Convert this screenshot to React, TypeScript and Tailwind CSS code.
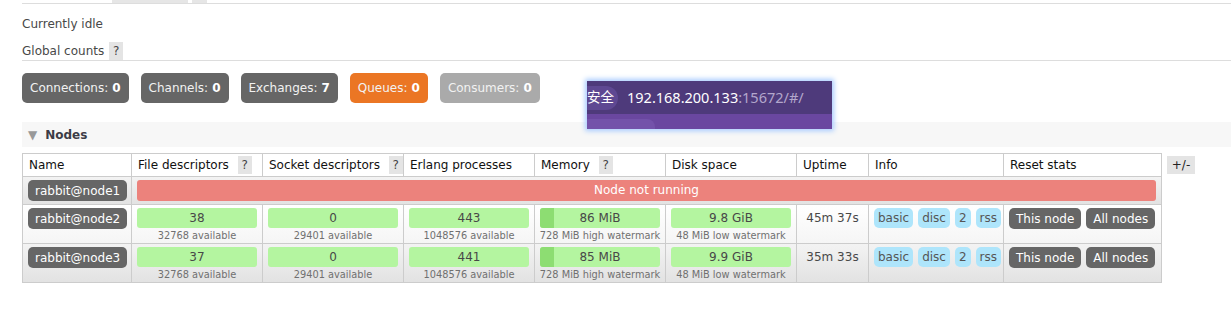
import React from "react";

type NodeRow = {
  name: string;
  fd: string;
  fdAvail: string;
  sd: string;
  sdAvail: string;
  erl: string;
  erlAvail: string;
  mem: string;
  memFill: number;
  disk: string;
  uptime: string;
};

const nodes: NodeRow[] = [
  {
    name: "rabbit@node2",
    fd: "38",
    fdAvail: "32768 available",
    sd: "0",
    sdAvail: "29401 available",
    erl: "443",
    erlAvail: "1048576 available",
    mem: "86 MiB",
    memFill: 14,
    disk: "9.8 GiB",
    uptime: "45m 37s",
  },
  {
    name: "rabbit@node3",
    fd: "37",
    fdAvail: "32768 available",
    sd: "0",
    sdAvail: "29401 available",
    erl: "441",
    erlAvail: "1048576 available",
    mem: "85 MiB",
    memFill: 14,
    disk: "9.9 GiB",
    uptime: "35m 33s",
  },
];

const Help = () => (
  <span className="ml-[5px] inline-flex h-[18px] w-[14px] items-center justify-center bg-[#e4e4e4] text-[#444]">
    ?
  </span>
);

const Pill = ({ children }: { children: React.ReactNode }) => (
  <span className="inline-flex h-[21px] items-center rounded-[5px] bg-[#666] px-[7px] text-white">
    {children}
  </span>
);

const Gauge = ({ value, sub, fill }: { value: string; sub: string; fill?: number }) => (
  <div className="flex flex-col items-center">
    <div className="relative h-[20px] w-full overflow-hidden rounded-[3px] bg-[#b4f5a0] text-center leading-[20px] text-[#484848]">
      {fill ? (
        <div className="absolute inset-y-0 left-0 bg-[#8ddd72]" style={{ width: fill }} />
      ) : null}
      <span className="relative">{value}</span>
    </div>
    <div className="mt-[1px] whitespace-nowrap text-[9.8px] leading-[13px] text-[#707070]">{sub}</div>
  </div>
);

const Count = ({ label, value, color }: { label: string; value: number; color: string }) => (
  <div className={`flex h-[30px] items-center rounded-[5px] px-[8px] text-[#f2f2f2] ${color}`}>
    {label}: <b className="ml-[4px] text-white">{value}</b>
  </div>
);

export default function App() {
  const th = "h-[23px] border border-[#ccc] px-[6px] text-left font-normal text-[#111] whitespace-nowrap";
  const td = "border border-[#ccc] px-[5px] pt-[3px] pb-[1px] align-top";

  return (
    <div className="relative h-[309px] w-[1231px] overflow-hidden bg-white font-['DejaVu_Sans',Verdana,sans-serif] text-[12px] text-[#484848]">
      <div className="pl-[22px]">
        <div className="flex h-[3px] gap-[4px] pl-[90px]">
          <div className="w-[76px] bg-[#e6e6e6]" />
          <div className="w-[15px] bg-[#e6e6e6]" />
        </div>
        <div className="border-t border-[#ddd]" />

        <div className="mt-[10px] leading-[20px]">Currently idle</div>
        <div className="mt-[8px] flex h-[19px] items-stretch border-b border-[#ddd] leading-[19px]">
          <span>Global counts</span>
          <span className="ml-[5px] flex w-[14px] items-center justify-center bg-[#e4e4e4] text-[#444]">?</span>
        </div>

        <div className="mt-[12px] flex gap-[12px]">
          <Count label="Connections" value={0} color="bg-[#666]" />
          <Count label="Channels" value={0} color="bg-[#666]" />
          <Count label="Exchanges" value={7} color="bg-[#666]" />
          <Count label="Queues" value={0} color="bg-[#eb7624]" />
          <Count label="Consumers" value={0} color="bg-[#aaa]" />
        </div>

        <div className="mt-[19px] flex h-[25px] items-center bg-[#f7f7f7] pl-[6px]">
          <span className="text-[12px] text-[#999]">▼</span>
          <span className="ml-[8px] font-bold text-[#3c3c46]">Nodes</span>
        </div>

        <div className="mt-[6px] flex items-start">
          <table className="w-[1139px] table-fixed border-collapse">
            <colgroup>
              <col className="w-[109px]" />
              <col className="w-[131px]" />
              <col className="w-[141px]" />
              <col className="w-[131px]" />
              <col className="w-[131px]" />
              <col className="w-[131px]" />
              <col className="w-[72px]" />
              <col className="w-[135px]" />
              <col className="w-[158px]" />
            </colgroup>
            <thead>
              <tr className="bg-white">
                <th className={th}>Name</th>
                <th className={th}>
                  File descriptors <Help />
                </th>
                <th className={th}>
                  Socket descriptors <Help />
                </th>
                <th className={th}>Erlang processes</th>
                <th className={th}>
                  Memory <Help />
                </th>
                <th className={th}>Disk space</th>
                <th className={th}>Uptime</th>
                <th className={th}>Info</th>
                <th className={th}>Reset stats</th>
              </tr>
            </thead>
            <tbody>
              <tr className="bg-linear-to-b from-[#f3f3f3] to-[#e2e2e2]">
                <td className="border border-[#ccc] px-[5px] pt-[3px] pb-[3px]">
                  <Pill>rabbit@node1</Pill>
                </td>
                <td colSpan={8} className="border border-[#ccc] px-[5px] pt-[3px] pb-[3px]">
                  <div className="h-[21px] rounded-[3px] bg-[#ec827c] text-center leading-[21px] text-white">
                    Node not running
                  </div>
                </td>
              </tr>
              {nodes.map((n, i) => (
                <tr
                  key={n.name}
                  className={
                    i % 2 === 0
                      ? "bg-linear-to-b from-white to-[#f5f5f5]"
                      : "bg-linear-to-b from-[#f3f3f3] to-[#e2e2e2]"
                  }
                >
                  <td className={td}>
                    <Pill>{n.name}</Pill>
                  </td>
                  <td className={td}>
                    <Gauge value={n.fd} sub={n.fdAvail} />
                  </td>
                  <td className={td}>
                    <Gauge value={n.sd} sub={n.sdAvail} />
                  </td>
                  <td className={td}>
                    <Gauge value={n.erl} sub={n.erlAvail} />
                  </td>
                  <td className={td}>
                    <Gauge value={n.mem} sub="728 MiB high watermark" fill={n.memFill} />
                  </td>
                  <td className={td}>
                    <Gauge value={n.disk} sub="48 MiB low watermark" />
                  </td>
                  <td className={`${td} text-center leading-[20px]`}>{n.uptime}</td>
                  <td className={td}>
                    <div className="flex gap-[5px] text-[#555]">
                      {["basic", "disc", "2", "rss"].map((b) => (
                        <span key={b} className="h-[20px] rounded-[5px] bg-[#aee5fb] px-[4px] leading-[20px]">
                          {b}
                        </span>
                      ))}
                    </div>
                  </td>
                  <td className={td}>
                    <div className="flex gap-[5px]">
                      <Pill>This node</Pill>
                      <Pill>All nodes</Pill>
                    </div>
                  </td>
                </tr>
              ))}
            </tbody>
          </table>
          <span className="ml-[5px] mt-[3px] flex h-[18px] w-[28px] items-center justify-center bg-[#e4e4e4] text-[#222]">
            +/-
          </span>
        </div>

        <div className="mt-[19px] flex h-[25px] items-center pl-[6px]">
          <span className="text-[12px] text-[#999]">▶</span>
          <span className="ml-[8px] font-bold text-[#3c3c46]">Churn statistics</span>
        </div>
      </div>

      {/* browser address bar popup lying over the page */}
      <div className="absolute left-[587px] top-[81px] flex h-[48px] w-[245px] flex-col overflow-hidden shadow-[0_0_5px_2px_#a9ccff] font-['Noto_Sans','Noto_Sans_CJK_SC',sans-serif]">
        <div className="flex h-[33px] items-center bg-[#4e3a7b]">
          <span className="-ml-[12px] flex h-[24px] items-center rounded-full bg-[#5e4892] pl-[12px] pr-[4px] text-[13.5px] text-white">
            安全
          </span>
          <span className="ml-[9px] text-[14.5px] text-white">
            192.168.200.133<span className="text-[#b3a7cc]">:15672/#/</span>
          </span>
        </div>
        <div className="flex flex-1 items-end bg-[#6a47a0]">
          <div className="h-[10px] w-[68px] rounded-tr-[8px] bg-[#7352aa]" />
        </div>
      </div>
    </div>
  );
}
